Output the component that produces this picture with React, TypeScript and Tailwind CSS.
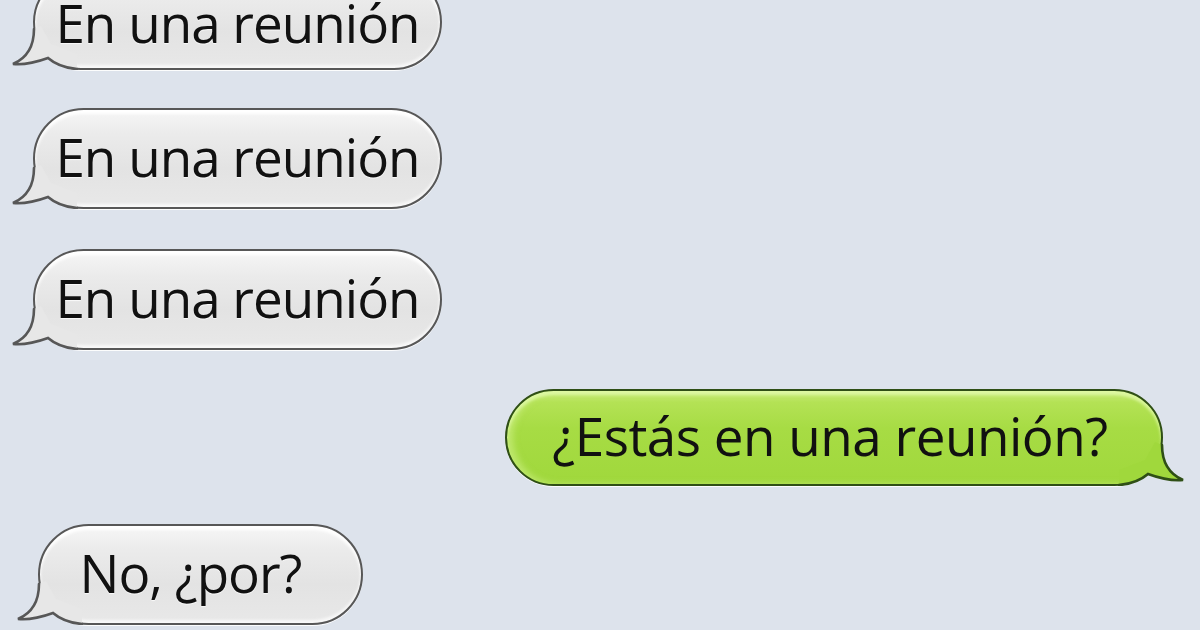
import React from "react";

type Side = "left" | "right";

// small curved tail drawn at the bottom corner of a bubble
function Tail({ side, fill, stroke }: { side: Side; fill: string; stroke: string }) {
  const pos =
    side === "left"
      ? "left-[-24px] bottom-[-2px]"
      : "right-[-24px] bottom-[-2px] scale-x-[-1]";
  return (
    <svg
      width="70"
      height="56"
      viewBox="0 0 70 56"
      className={`absolute ${pos}`}
      aria-hidden
    >
      <path
        d="M23 15 C23 32 16 44 2 50 C12 51 26 48 37 44 C44 50 54 54 66 55 L66 40 L40 30 L30 12 Z"
        fill={fill}
      />
      <path
        d="M23 15 C23 32 16 44 2 50 C12 51 26 48 37 44 C44 50 54 54 66 55"
        fill="none"
        stroke={stroke}
        strokeWidth="2.6"
        strokeLinecap="round"
      />
    </svg>
  );
}

function GrayBubble({
  text,
  width,
  height = "h-[101px]",
  extra = "",
  textPad = "pb-[4px] leading-none",
}: {
  text: string;
  width: string;
  height?: string;
  extra?: string;
  textPad?: string;
}) {
  return (
    <div
      className={`relative flex items-center justify-center ${height} ${width} ${extra} rounded-full border-[2.5px] border-[#575757] bg-[linear-gradient(to_bottom,#f6f6f6_0%,#ebebeb_25%,#e3e3e3_60%,#e8e8e8_100%)] shadow-[inset_0_4px_3px_rgba(255,255,255,0.95),inset_0_-3px_3px_rgba(255,255,255,0.7),0_1px_0_rgba(255,255,255,0.9)]`}
    >
      <Tail side="left" fill="#e7e7e7" stroke="#575757" />
      <span
        className={`relative z-10 font-['Open_Sans',sans-serif] text-[53px] tracking-[-1px] text-[#111] ${textPad} [text-shadow:0_1px_1px_rgba(255,255,255,0.8)]`}
      >
        {text}
      </span>
    </div>
  );
}

export default function App() {
  return (
    <div className="w-full h-[630px] overflow-hidden bg-[#dde3ec]">
      <div className="flex flex-col gap-[40px] mt-[-26px]">
        <div className="pl-[33px] mb-[-2px]">
          <GrayBubble
            text="En una reunión"
            width="w-[409px]"
            height="h-[96px]"
            textPad="pt-[3px] leading-[0.8]"
          />
        </div>
        <div className="pl-[33px]">
          <GrayBubble text="En una reunión" width="w-[409px]" />
        </div>
        <div className="pl-[33px]">
          <GrayBubble text="En una reunión" width="w-[409px]" />
        </div>

        {/* outgoing green message */}
        <div className="flex justify-end pr-[37px] -mt-[1px]">
          <div className="relative flex items-center justify-center pr-[8px] h-[97px] w-[658px] rounded-full border-[2.5px] border-[#2f4f16] bg-[linear-gradient(to_bottom,#c9ed7e_0%,#b4e255_12%,#a7dc44_40%,#a0d83c_100%)] shadow-[inset_0_4px_3px_rgba(225,250,170,0.8),inset_6px_0_6px_rgba(215,245,150,0.5),0_1px_0_rgba(255,255,255,0.9)]">
            <Tail side="right" fill="#a0d83c" stroke="#2f4f16" />
            <span className="relative z-10 font-['Open_Sans',sans-serif] text-[53px] leading-none tracking-[-0.5px] text-[#111] pb-[4px]">
              ¿Estás en una reunión?
            </span>
          </div>
        </div>

        <div className="pl-[38px] -mt-[2px]">
          <GrayBubble text="No, ¿por?" width="w-[325px]" extra="pr-[20px]" />
        </div>
      </div>
    </div>
  );
}
